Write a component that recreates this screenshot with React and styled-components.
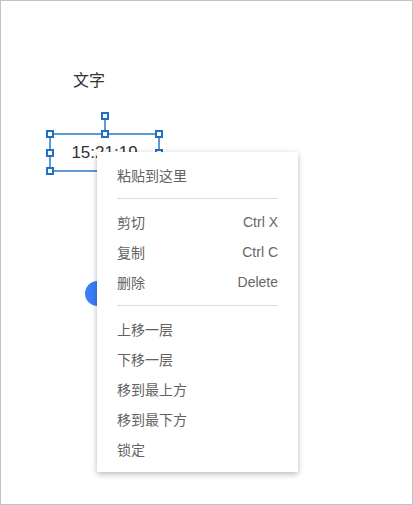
import React from "react";
import styled, { createGlobalStyle } from "styled-components";

const Global = createGlobalStyle`
  html, body { margin: 0; padding: 0; background: #fff; }
  body { font-family: "Liberation Sans", "Noto Sans CJK SC", sans-serif; }
  * { box-sizing: border-box; }
`;

const Canvas = styled.div`
  position: relative;
  width: 413px;
  height: 505px;
  border: 1px solid #c3c3c3;
  background: #fff;
  overflow: hidden;
`;

const TextNode = styled.div`
  position: absolute;
  left: ${(p) => p.$x}px;
  top: ${(p) => p.$y}px;
  font-size: ${(p) => p.$size}px;
  color: #333;
  line-height: 1;
  white-space: nowrap;
`;

const Selection = styled.div`
  position: absolute;
  left: 48px;
  top: 132px;
  width: 111px;
  height: 39px;
  border: 2px solid #5b9ad6;
  display: flex;
  align-items: center;
  justify-content: center;
  font-size: 17px;
  color: #333;
`;

const Handle = styled.span`
  position: absolute;
  width: 8px;
  height: 8px;
  background: #fff;
  border: 2px solid #1f6fc2;
  left: ${(p) => p.$x};
  top: ${(p) => p.$y};
  transform: translate(-50%, -50%);
`;

const RotateStem = styled.span`
  position: absolute;
  left: 50%;
  top: -16px;
  width: 2px;
  height: 14px;
  background: #5b9ad6;
  transform: translateX(-50%);
`;

const Dot = styled.div`
  position: absolute;
  left: 84px;
  top: 280px;
  width: 25px;
  height: 25px;
  border-radius: 50%;
  background: #3b7ef6;
`;

const Menu = styled.ul`
  position: absolute;
  left: 96px;
  top: 151px;
  width: 201px;
  margin: 0;
  padding: 8px 0;
  list-style: none;
  background: #fff;
  box-shadow: 0 2px 6px rgba(0, 0, 0, 0.28);
  font-family: "Liberation Sans", "Noto Sans CJK SC", sans-serif;
  font-size: 14px;
  color: #636363;
`;

const Item = styled.li`
  height: 30px;
  padding: 0 20px;
  display: flex;
  align-items: center;
  justify-content: space-between;
`;

const Shortcut = styled.span`
  color: #666;
`;

const Divider = styled.li`
  height: 1px;
  margin: 8px 20px;
  background: #dcdcdc;
`;

const handles = [
  ["0%", "0%"], ["50%", "0%"], ["100%", "0%"],
  ["0%", "50%"], ["100%", "50%"],
  ["0%", "100%"], ["50%", "100%"], ["100%", "100%"],
];

const offset = (v) => (v === "0%" ? "-1px" : v === "100%" ? "1px" : "0px");

const sections = [
  [["粘贴到这里"]],
  [["剪切", "Ctrl X"], ["复制", "Ctrl C"], ["删除", "Delete"]],
  [["上移一层"], ["下移一层"], ["移到最上方"], ["移到最下方"], ["锁定"]],
];

export default function App() {
  return (
    <>
      <Global />
      <Canvas>
        <TextNode $x={72} $y={72} $size={16}>文字</TextNode>
        <Dot />
        <Selection>
          15:21:19
          <RotateStem />
          <Handle $x="50%" $y="-19px" />
          {handles.map(([x, y], i) => (
            <Handle key={i} $x={`calc(${x} + ${offset(x)})`} $y={`calc(${y} + ${offset(y)})`} />
          ))}
        </Selection>
        <Menu>
          {sections.map((sec, si) => (
            <React.Fragment key={si}>
              {si > 0 && <Divider />}
              {sec.map(([label, sc]) => (
                <Item key={label}>
                  <span>{label}</span>
                  {sc && <Shortcut>{sc}</Shortcut>}
                </Item>
              ))}
            </React.Fragment>
          ))}
        </Menu>
      </Canvas>
    </>
  );
}
